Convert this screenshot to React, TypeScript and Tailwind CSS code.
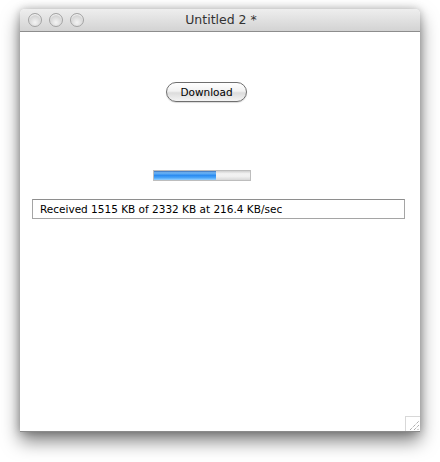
import React from "react";

const font = { fontFamily: '"DejaVu Sans", "Liberation Sans", sans-serif' };

function Light() {
  return (
    <div className="w-[14px] h-[14px] rounded-full border border-[#a3a3a3] bg-[radial-gradient(circle_at_50%_70%,#f4f4f4_0%,#d8d8d8_55%,#bdbdbd_100%)] shadow-[inset_0_1px_1px_rgba(255,255,255,0.9)]" />
  );
}

export default function App() {
  const pct = 65;
  return (
    <div className="w-[440px] h-[462px] bg-white pl-[20px] pt-[9px]" style={font}>
      <div className="w-[400px] h-[423px] flex flex-col bg-white rounded-t-[5px] shadow-[0_9px_18px_rgba(0,0,0,0.5),0_0_8px_rgba(0,0,0,0.25)] border-b border-[#8a8a8a]">
        <div className="h-[23px] flex items-center relative rounded-t-[5px] bg-[linear-gradient(#eeeeee,#d3d3d3)] border-b border-[#8d8d8d] pl-[8px] gap-[7px]">
          <Light />
          <Light />
          <Light />
          <div className="absolute inset-0 flex items-center justify-center text-[12.5px] text-[#333] pl-[2px] leading-none">
            Untitled 2 *
          </div>
        </div>
        <div className="flex-1 flex flex-col items-start relative">
          <button className="mt-[50px] ml-[146px] w-[81px] h-[20px] rounded-full border border-[#6f6f6f] bg-[linear-gradient(#ffffff_0%,#f2f2f2_45%,#dcdcdc_55%,#f4f4f4_100%)] text-[10.5px] text-black flex items-center justify-center leading-none shadow-[0_1px_1px_rgba(0,0,0,0.15)]">
            Download
          </button>
          <div className="mt-[68px] ml-[133px] w-[98px] h-[11px] border border-[#bdbdbd] bg-[linear-gradient(#cfcfcf_0%,#f2f2f2_30%,#f0f0f0_60%,#d8d8d8_100%)] flex overflow-hidden">
            <div
              className="h-full bg-[linear-gradient(#3b6fb8_0%,#6fb6f6_20%,#2c8cf0_50%,#4aa6fa_75%,#9ad0fb_100%)]"
              style={{ width: `${pct}%` }}
            />
          </div>
          <div className="mt-[18px] ml-[12px] w-[373px] h-[20px] border border-[#a5a5a5] border-t-[#8e8e8e] flex items-center pl-[7px] text-[10.5px] text-black leading-none">
            Received 1515 KB of 2332 KB at 216.4 KB/sec
          </div>
          <div className="absolute right-0 bottom-0 w-[15px] h-[15px] border-l border-t border-[#d8d8d8] bg-white">
            <svg width="15" height="15" viewBox="0 0 15 15">
              <path d="M4 13 L13 4 M8 13 L13 8 M11.5 13 L13 11.5" stroke="#8a8a8a" strokeWidth="1" strokeDasharray="1 1" />
            </svg>
          </div>
        </div>
      </div>
    </div>
  );
}
